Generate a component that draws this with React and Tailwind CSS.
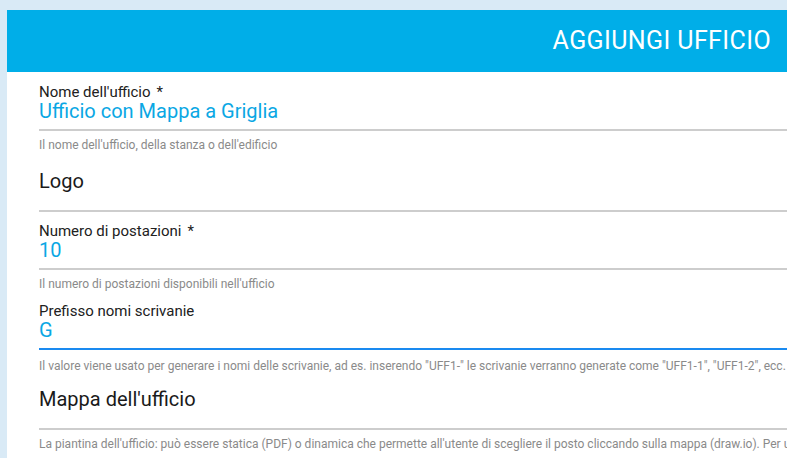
const font = { fontFamily: "Roboto, 'Liberation Sans', sans-serif" };

function Helper({ text, gap = "mt-[7px]" }) {
  return (
    <div className={`${gap} text-[12px] leading-[14px] text-[#8a8a8a] whitespace-nowrap`}>
      {text}
    </div>
  );
}

function Field({ label, required, value, helper, focused, helperGap }) {
  return (
    <div>
      <div className="text-[15px] leading-[18px] text-[#212121]">
        {label}
        {required && <span className="ml-[6px]">*</span>}
      </div>
      <div className="text-[20px] leading-[20px] text-[#0aa7e4] pb-[8px]">{value}</div>
      <div className={focused ? "h-[2px] bg-[#1a8af0]" : "h-[2px] bg-[#cdcdcd]"} />
      {helper && <Helper text={helper} gap={helperGap} />}
    </div>
  );
}

function Upload({ label, helper }) {
  return (
    <div>
      <div className="text-[20px] leading-[24px] text-[#1a1a1a] pb-[17px]">{label}</div>
      <div className="h-[2px] bg-[#cdcdcd]" />
      {helper && <Helper text={helper} />}
    </div>
  );
}

export default function App() {
  return (
    <div className="min-h-screen bg-[#d9eaf6] overflow-hidden pt-[10px] pl-[7px]" style={font}>
      <div className="w-[780px] min-h-[448px] bg-white overflow-hidden">
        <div className="h-[62px] bg-[#00aee8] flex items-center justify-end pr-[16px]">
          <h1 className="text-[25px] leading-[28px] tracking-[0.4px] text-white">AGGIUNGI UFFICIO</h1>
        </div>
        <div className="pl-[32px] pt-[11px]">
          <Field
            label="Nome dell'ufficio"
            required
            value="Ufficio con Mappa a Griglia"
            helper="Il nome dell'ufficio, della stanza o dell'edificio"
          />
          <div className="mt-[17px]">
            <Upload label="Logo" />
          </div>
          <div className="mt-[10px]">
            <Field
              label="Numero di postazioni"
              required
              value="10"
              helper="Il numero di postazioni disponibili nell'ufficio"
            />
          </div>
          <div className="mt-[11px]">
            <Field
              label="Prefisso nomi scrivanie"
              value="G"
              focused
              helperGap="mt-[9px]"
              helper={'Il valore viene usato per generare i nomi delle scrivanie, ad es. inserendo "UFF1-" le scrivanie verranno generate come "UFF1-1", "UFF1-2", ecc.'}
            />
          </div>
          <div className="mt-[14px]">
            <Upload
              label="Mappa dell'ufficio"
              helper="La piantina dell'ufficio: può essere statica (PDF) o dinamica che permette all'utente di scegliere il posto cliccando sulla mappa (draw.io). Per utilizzare la mappa dinamica"
            />
          </div>
        </div>
      </div>
    </div>
  );
}
